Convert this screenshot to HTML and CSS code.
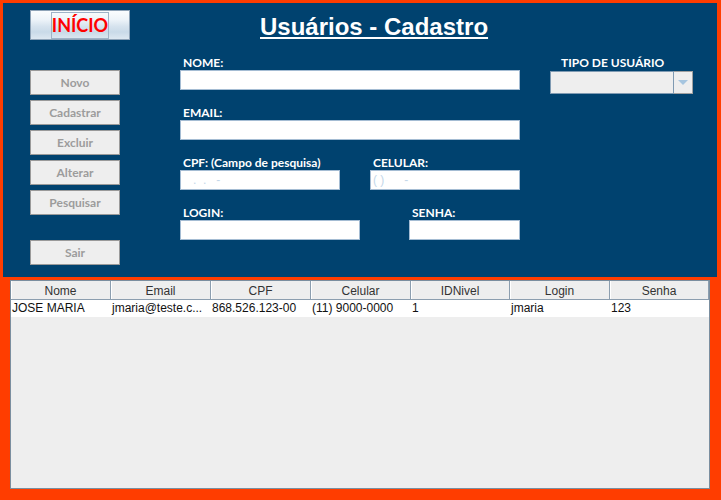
FILE: index.html
```html
<!DOCTYPE html>
<html>
<head>
<meta charset="utf-8">
<title>Usuários - Cadastro</title>
<link rel="stylesheet" href="styles.css">
</head>
<body>
<div class="app">
  <section class="panel">
    <div class="col-left">
      <button class="btn-inicio"><span class="focus">INÍCIO</span></button>
      <div class="actions">
        <button class="btn">Novo</button>
        <button class="btn">Cadastrar</button>
        <button class="btn">Excluir</button>
        <button class="btn">Alterar</button>
        <button class="btn">Pesquisar</button>
      </div>
      <button class="btn btn-sair">Sair</button>
    </div>
    <div class="col-mid">
      <h1 class="title">Usuários - Cadastro</h1>
      <div class="form">
        <div class="field"><div class="label">NOME:</div><div class="input"></div></div>
        <div class="field"><div class="label">EMAIL:</div><div class="input"></div></div>
        <div class="row">
          <div class="field f-cpf"><div class="label">CPF: (Campo de pesquisa)</div><div class="input mask">   .  .   -</div></div>
          <div class="field f-cel"><div class="label">CELULAR:</div><div class="input mask">( )      -</div></div>
        </div>
        <div class="row">
          <div class="field f-login"><div class="label">LOGIN:</div><div class="input"></div></div>
          <div class="field f-senha"><div class="label">SENHA:</div><div class="input"></div></div>
        </div>
      </div>
    </div>
    <div class="col-right">
      <div class="label label-tipo">TIPO DE USUÁRIO</div>
      <div class="combo">
        <div class="combo-field"></div>
        <div class="combo-arrow">
          <svg width="10" height="5" viewBox="0 0 10 5"><polygon points="0,0 10,0 5,5" fill="#a6c5df"/></svg>
        </div>
      </div>
    </div>
  </section>
  <section class="grid">
    <div class="thead">
      <div class="th">Nome</div>
      <div class="th">Email</div>
      <div class="th">CPF</div>
      <div class="th">Celular</div>
      <div class="th">IDNivel</div>
      <div class="th">Login</div>
      <div class="th">Senha</div>
    </div>
    <div class="trow">
      <div class="td">JOSE MARIA</div>
      <div class="td">jmaria@teste.c...</div>
      <div class="td">868.526.123-00</div>
      <div class="td">(11) 9000-0000</div>
      <div class="td">1</div>
      <div class="td">jmaria</div>
      <div class="td">123</div>
    </div>
  </section>
</div>
</body>
</html>
```
FILE: styles.css
```css
* { box-sizing: border-box; margin: 0; padding: 0; }
html, body { height: 100%; }
body {
  background: #ff3d00;
  font-family: Lato, "Open Sans", sans-serif;
}
.app { padding: 3px 4px 0 3px; }

.panel {
  height: 274px;
  background: #00426f;
  display: flex;
  padding-left: 27px;
}

/* left column */
.col-left {
  width: 100px;
  padding-top: 7px;
  display: flex;
  flex-direction: column;
  align-items: flex-start;
}
.btn-inicio {
  width: 100px;
  height: 30px;
  border: 1px solid #8ea3b7;
  background: linear-gradient(#fbfdfe 0%, #eef4f9 30%, #d6e3ee 55%, #c9dae8 75%, #dde8f1 100%);
  display: flex;
  align-items: center;
  justify-content: center;
  cursor: pointer;
}
.focus {
  display: inline-flex;
  align-items: center;
  justify-content: center;
  width: 58px;
  height: 27px;
  border: 1px solid #9fb3c7;
  font: bold 18px/25px Lato, sans-serif;
  color: #ff0000;
}
.actions {
  margin-top: 30px;
  display: flex;
  flex-direction: column;
  gap: 5px;
}
.btn {
  width: 90px;
  height: 25px;
  background: #eeeeee;
  border: 1px solid #9a9a9a;
  color: #9c9c9c;
  font: bold 12px/23px Lato, sans-serif;
  text-align: center;
}
.btn-sair { margin-top: 25px; }

/* middle column */
.col-mid {
  width: 340px;
  margin-left: 50px;
}
.title {
  margin-top: 10px;
  margin-bottom: 15px;
  padding-left: 80px;
  font: bold 24px/28px "Liberation Sans", Arial, sans-serif;
  color: #ffffff;
  text-decoration: underline;
  text-decoration-thickness: 2px;
  text-underline-offset: 2px;
  white-space: nowrap;
}
.form {
  display: flex;
  flex-direction: column;
  gap: 16px;
}
.label {
  font: bold 12px/14px Lato, sans-serif;
  color: #ffffff;
  padding-left: 3px;
  white-space: nowrap;
}
.input {
  height: 20px;
  background: #ffffff;
  border: 1px solid #a4bcd3;
}
.mask {
  font: 12px/18px "Liberation Sans", Arial, sans-serif;
  color: #c4d7e9;
  white-space: pre;
  padding-left: 2px;
}
.row {
  display: flex;
  justify-content: space-between;
}
.f-cpf { width: 160px; }
.f-cel { width: 150px; }
.f-login { width: 180px; }
.f-senha { width: 111px; }

/* right column */
.col-right {
  width: 143px;
  margin-left: 30px;
  padding-top: 53px;
}
.label-tipo { padding-left: 11px; }
.combo {
  margin-top: 1px;
  height: 23px;
  display: flex;
}
.combo-field {
  flex: 1;
  background: #eeeeee;
  border: 1px solid #7f9ab2;
}
.combo-arrow {
  width: 19px;
  background: #eeeeee;
  border: 1px solid #a0a0a0;
  border-left: none;
  display: flex;
  align-items: center;
  justify-content: center;
}

/* table */
.grid {
  margin: 3px 0 0 7px;
  width: 700px;
  height: 209px;
  background: #eeeeee;
  border: 1px solid #7b8e9f;
}
.thead, .trow {
  display: grid;
  grid-template-columns: 100px 100px 100px 100px 99px 100px 99px;
}
.th {
  height: 19px;
  background: #eeeeee;
  border-right: 1px solid #8c9eaf;
  border-bottom: 1px solid #8c9eaf;
  box-shadow: inset 1px 0 #ffffff;
  font: 12px/18px "Liberation Sans", Arial, sans-serif;
  color: #333333;
  text-align: center;
  padding-top: 1px;
}
.trow { background: #ffffff; height: 17px; }
.td {
  font: 12px/17px "Liberation Sans", Arial, sans-serif;
  color: #111111;
  padding-left: 1px;
  white-space: nowrap;
  overflow: hidden;
}
```
